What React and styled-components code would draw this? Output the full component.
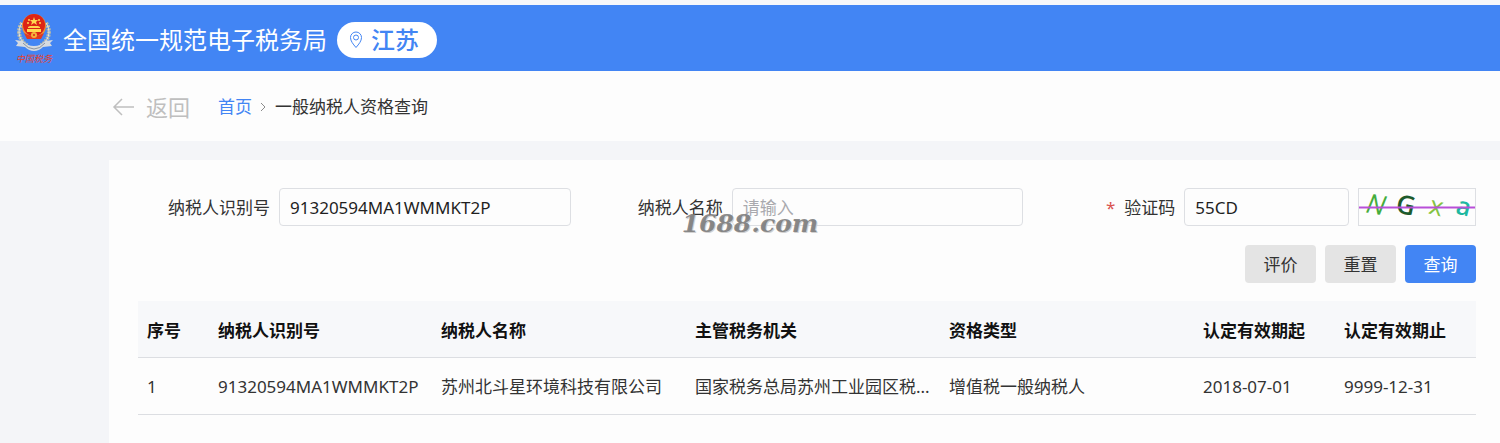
import React, { useState } from 'react';
import styled, { createGlobalStyle } from 'styled-components';

const GlobalStyle = createGlobalStyle`
  * {
    box-sizing: border-box;
  }
  body {
    margin: 0;
    background: #f4f5f8;
    color: #333333;
    font-family: 'Noto Sans', 'Noto Sans CJK SC', sans-serif;
    font-size: 17px;
    line-height: 24px;
  }
  input,
  button {
    font: inherit;
  }
`;

const Page = styled.div`
  display: flex;
  flex-direction: column;
  min-height: 100vh;
`;

const Header = styled.header`
  display: flex;
  align-items: center;
  height: 71px;
  padding: 4px 14px 0;
  border-top: 5px solid #f6f7fa;
  background: #4285f4;
`;

const Emblem = styled.svg`
  width: 40px;
  height: 54px;
  flex: none;
`;

const SiteName = styled.h1`
  margin: 0 10px 0 9px;
  color: #ffffff;
  font-size: 24px;
  font-weight: 400;
  line-height: 36px;
  white-space: nowrap;
`;

const Region = styled.button`
  display: flex;
  align-items: center;
  gap: 8px;
  height: 36px;
  padding: 0 18px 0 12px;
  border: none;
  border-radius: 18px;
  background: #ffffff;
  color: #4285f4;
  font-size: 24px;
  font-weight: 500;
  line-height: 36px;
  white-space: nowrap;
  cursor: pointer;
`;

const Crumbs = styled.nav`
  display: flex;
  align-items: center;
  height: 70px;
  padding: 2px 112px 0;
  background: #fdfdfd;
`;

const Back = styled.a`
  display: flex;
  align-items: center;
  gap: 12px;
  margin-right: 28px;
  color: #bfbfbf;
  font-size: 22px;
  text-decoration: none;
`;

const HomeLink = styled.a`
  color: #4285f4;
  text-decoration: none;
`;

const Chevron = styled.svg`
  margin: 0 8px 0 7px;
`;

const Card = styled.main`
  flex: 1;
  margin: 19px 0 0 109px;
  padding: 28px 24px 28px 29px;
  background: #fdfdfd;
`;

const Form = styled.form`
  display: grid;
  grid-template-columns: repeat(3, minmax(0, 1fr));
  column-gap: 20px;
  row-gap: 19px;
`;

const Field = styled.div`
  position: relative;
  display: flex;
  align-items: center;
`;

const Label = styled.label`
  flex: none;
  width: 141px;
  padding: 2px 9px 0 0;
  text-align: right;
  white-space: nowrap;
`;

const Required = styled.span`
  margin-right: 9px;
  color: #d9534f;
`;

const Input = styled.input`
  flex: 1;
  width: 0;
  min-width: 0;
  height: 38px;
  padding: 0 10px;
  border: 1px solid #dddfe3;
  border-radius: 4px;
  background: #fdfdfd;
  color: #1f1f1f;
  outline: none;

  &::placeholder {
    color: #a9a9ae;
    opacity: 1;
  }
`;

const Captcha = styled.svg`
  flex: none;
  width: 118px;
  height: 38px;
  margin-left: 9px;
  border: 1px solid #dddfe3;
`;

const Watermark = styled.span`
  position: absolute;
  top: 18px;
  left: 91px;
  color: rgba(120, 120, 120, 0.85);
  font-family: 'DejaVu Serif', serif;
  font-size: 25px;
  font-style: italic;
  font-weight: 700;
  line-height: 36px;
  text-shadow: 1px 1px 0 #d0d0d0;
  pointer-events: none;
`;

const Actions = styled.div`
  grid-column: 1 / -1;
  display: flex;
  justify-content: flex-end;
  gap: 9px;
`;

const Button = styled.button`
  width: 71px;
  height: 38px;
  padding: 2px 0 0;
  border: none;
  border-radius: 4px;
  background: ${(props) => (props.$primary ? '#4285f4' : '#e4e4e4')};
  color: ${(props) => (props.$primary ? '#ffffff' : '#333333')};
  cursor: pointer;
`;

const Table = styled.table`
  width: 100%;
  margin-top: 18px;
  border-collapse: collapse;
  table-layout: fixed;
`;

const Col = styled.col`
  width: ${(props) => props.$width || 'auto'};
`;

const Th = styled.th`
  height: 56px;
  padding: 4px 9px 0;
  border-bottom: 1px solid #dcdee2;
  background: #f7f8fa;
  color: #111111;
  font-weight: 700;
  text-align: left;
  white-space: nowrap;
`;

const Td = styled.td`
  height: 57px;
  padding: 2px 9px 0;
  border-bottom: 1px solid #dcdee2;
  white-space: nowrap;
`;

const columns = [
  { title: '序号', width: '71px' },
  { title: '纳税人识别号', width: '223px' },
  { title: '纳税人名称' },
  { title: '主管税务机关' },
  { title: '资格类型' },
  { title: '认定有效期起', width: '141px' },
  { title: '认定有效期止', width: '141px' },
];

const rows = [
  [
    '1',
    '91320594MA1WMMKT2P',
    '苏州北斗星环境科技有限公司',
    '国家税务总局苏州工业园区税...',
    '增值税一般纳税人',
    '2018-07-01',
    '9999-12-31',
  ],
];

const TaxEmblem = () => (
  <Emblem viewBox='0 0 40 54' aria-hidden='true'>
    {/* wheat ears */}
    <path
      d='M8 10C3 17 4 27 14 33M32 10C37 17 36 27 26 33'
      fill='none'
      stroke='#b9b9a6'
      strokeWidth='4'
      strokeDasharray='2 1'
    />
    <path
      d='M8 10C3 17 4 27 14 33M32 10C37 17 36 27 26 33'
      fill='none'
      stroke='#ecebdc'
      strokeWidth='1'
    />
    {/* ribbon */}
    <path
      d='M1 27L9 28Q13 33 20 33Q27 33 31 28L39 27L36 30L38 33L29 34Q25 38 20 38Q15 38 11 34L2 33L4 30Z'
      fill='#d5dae0'
    />
    <path d='M9 30Q14 36 20 36Q26 36 31 30' fill='none' stroke='#8b939f' />
    {/* national emblem */}
    <circle cx='20' cy='13' r='12' fill='#e9903a' />
    <circle cx='20' cy='12' r='11' fill='#dd2416' />
    <path
      d='M20 4l1 3h3l-2 2 1 3-3-2-3 2 1-3-2-2h3z'
      fill='#ffd94f'
    />
    <g fill='#ffd94f'>
      <circle cx='14' cy='10' r='1' />
      <circle cx='26' cy='10' r='1' />
      <circle cx='15' cy='7' r='1' />
      <circle cx='25' cy='7' r='1' />
      <path d='M14 15h12v-1l-2-1h-8l-2 1zM13 16h14v3H13z' />
    </g>
    <path d='M10 20Q20 26 30 20L27 26H13Z' fill='#e23a20' />
    <circle cx='20' cy='22' r='3' fill='#f3b13c' />
    <circle cx='20' cy='22' r='1' fill='#dd2416' />
    <text
      x='20'
      y='49'
      textAnchor='middle'
      fill='#e8402c'
      fontSize='9'
      fontStyle='italic'
    >
      中国税务
    </text>
  </Emblem>
);

const App = () => {
  const [taxId, setTaxId] = useState('91320594MA1WMMKT2P');
  const [name, setName] = useState('');
  const [code, setCode] = useState('55CD');

  const handleReset = () => {
    setTaxId('');
    setName('');
    setCode('');
  };

  return (
    <Page>
      <GlobalStyle />
      <Header>
        <TaxEmblem />
        <SiteName>全国统一规范电子税务局</SiteName>
        <Region type='button'>
          <svg
            width='14'
            height='18'
            viewBox='0 0 14 18'
            fill='none'
            stroke='#4285f4'
            aria-hidden='true'
          >
            <path d='M7 16.5C4 13 1.5 10 1.5 6.5a5.5 5.5 0 0 1 11 0C12.5 10 10 13 7 16.5Z' />
            <circle cx='7' cy='6.5' r='2.5' />
          </svg>
          江苏
        </Region>
      </Header>
      <Crumbs>
        <Back href='#back'>
          <svg
            width='22'
            height='18'
            viewBox='0 0 22 18'
            fill='none'
            stroke='currentColor'
            strokeWidth='1.5'
            aria-hidden='true'
          >
            <path d='M22 9H2M10 1L2 9l8 8' />
          </svg>
          返回
        </Back>
        <HomeLink href='#home'>首页</HomeLink>
        <Chevron
          width='8'
          height='10'
          viewBox='0 0 8 10'
          fill='none'
          stroke='#8c8c8c'
          aria-hidden='true'
        >
          <path d='M2 1l4 4-4 4' />
        </Chevron>
        <span>一般纳税人资格查询</span>
      </Crumbs>
      <Card>
        <Form onSubmit={(e) => e.preventDefault()}>
          <Field>
            <Label htmlFor='taxId'>纳税人识别号</Label>
            <Input
              id='taxId'
              value={taxId}
              onChange={(e) => setTaxId(e.target.value)}
            />
          </Field>
          <Field>
            <Label htmlFor='name'>纳税人名称</Label>
            <Input
              id='name'
              placeholder='请输入'
              value={name}
              onChange={(e) => setName(e.target.value)}
            />
            <Watermark>1688.com</Watermark>
          </Field>
          <Field>
            <Label htmlFor='code'>
              <Required>*</Required>验证码
            </Label>
            <Input
              id='code'
              value={code}
              onChange={(e) => setCode(e.target.value)}
            />
            <Captcha viewBox='0 0 116 36' role='img' aria-label='验证码图片'>
              <g fontFamily='Open Sans, sans-serif'>
                <text
                  x='7'
                  y='25'
                  fontSize='27'
                  fill='#45ad3c'
                  fontStyle='italic'
                  transform='rotate(10 16 18)'
                >
                  N
                </text>
                <text
                  x='37'
                  y='25'
                  fontSize='26'
                  fill='#1d5a2c'
                  fontWeight='600'
                  transform='rotate(12 46 18)'
                >
                  G
                </text>
                <text
                  x='70'
                  y='26'
                  fontSize='26'
                  fill='#84c341'
                  transform='rotate(14 76 20)'
                >
                  x
                </text>
                <text
                  x='97'
                  y='26'
                  fontSize='25'
                  fill='#1db8a0'
                  fontWeight='600'
                  transform='rotate(14 104 20)'
                >
                  a
                </text>
              </g>
              <path d='M0 18.5H116' stroke='#b84fd8' strokeWidth='2' />
            </Captcha>
          </Field>
          <Actions>
            <Button type='button'>评价</Button>
            <Button type='button' onClick={handleReset}>
              重置
            </Button>
            <Button type='submit' $primary>
              查询
            </Button>
          </Actions>
        </Form>
        <Table>
          <colgroup>
            {columns.map((col) => (
              <Col key={col.title} $width={col.width} />
            ))}
          </colgroup>
          <thead>
            <tr>
              {columns.map((col) => (
                <Th key={col.title}>{col.title}</Th>
              ))}
            </tr>
          </thead>
          <tbody>
            {rows.map((row) => (
              <tr key={row[0]}>
                {row.map((cell) => (
                  <Td key={cell}>{cell}</Td>
                ))}
              </tr>
            ))}
          </tbody>
        </Table>
      </Card>
    </Page>
  );
};

export default App;
